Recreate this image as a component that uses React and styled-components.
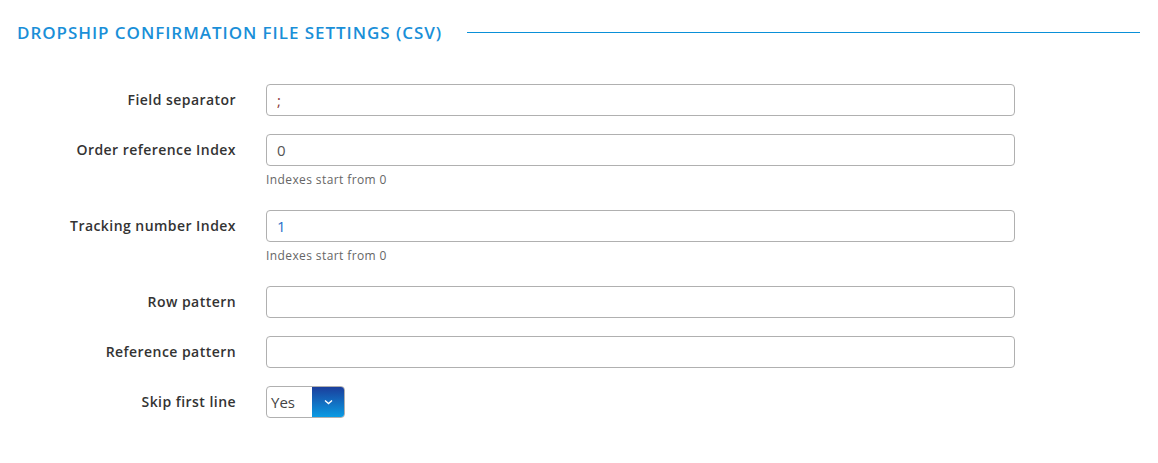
import React from "react";
import styled, { createGlobalStyle } from "styled-components";

const GlobalStyle = createGlobalStyle`
  body {
    margin: 0;
    background: #fff;
    font-family: "Open Sans", "Liberation Sans", sans-serif;
  }
`;

const Page = styled.div`
  padding: 20px 18px 40px 17px;
`;

const Heading = styled.div`
  display: flex;
  align-items: center;
  gap: 25px;
  height: 24px;
  margin-bottom: 40px;
`;

const Title = styled.h2`
  margin: 0;
  font-size: 17px;
  font-weight: 600;
  color: #1a8fd8;
  letter-spacing: 0.95px;
  white-space: nowrap;
`;

const Rule = styled.div`
  flex: 1;
  height: 1px;
  background: #0a90d8;
`;

const Form = styled.div`
  display: flex;
  flex-direction: column;
  gap: 18px;
`;

const Row = styled.div`
  display: grid;
  grid-template-columns: 219px 749px;
  column-gap: 30px;
  align-items: start;
`;

const Label = styled.label`
  text-align: right;
  font-size: 14px;
  font-weight: 600;
  color: #333;
  line-height: 32px;
  letter-spacing: 0.45px;
  white-space: nowrap;
`;

const Field = styled.div`
  display: flex;
  flex-direction: column;
`;

const Input = styled.input`
  box-sizing: border-box;
  width: 100%;
  height: 32px;
  padding: 0 10px;
  border: 1px solid #b0b0b0;
  border-radius: 4px;
  font-family: inherit;
  font-size: 15px;
  color: ${(p) => p.$color || "#555"};
  outline: none;
`;

const Help = styled.div`
  padding: 6px 0 5px;
  font-size: 12px;
  line-height: 15px;
  letter-spacing: 0.4px;
  color: #666;
`;

const Select = styled.div`
  display: flex;
  width: 79px;
  height: 32px;
  box-sizing: border-box;
  border: 1px solid #b0b0b0;
  border-radius: 4px;
  overflow: hidden;
`;

const SelectValue = styled.div`
  flex: 1;
  padding-left: 4px;
  font-size: 15px;
  line-height: 30px;
  color: #444;
`;

const SelectButton = styled.div`
  width: 32px;
  display: flex;
  align-items: center;
  justify-content: center;
  background: linear-gradient(to bottom, #1b3e9c, #0a9be3);
`;

const Chevron = () => (
  <svg width="9" height="6" viewBox="0 0 9 6">
    <path d="M1 1.5l3.5 3 3.5-3" fill="none" stroke="#fff" strokeWidth="1.4" />
  </svg>
);

export default function App() {
  return (
    <>
      <GlobalStyle />
      <Page>
        <Heading>
          <Title>DROPSHIP CONFIRMATION FILE SETTINGS (CSV)</Title>
          <Rule />
        </Heading>
        <Form>
          <Row>
            <Label>Field separator</Label>
            <Field>
              <Input defaultValue=";" $color="#8b3a3a" />
            </Field>
          </Row>
          <Row>
            <Label>Order reference Index</Label>
            <Field>
              <Input defaultValue="0" />
              <Help>Indexes start from 0</Help>
            </Field>
          </Row>
          <Row>
            <Label>Tracking number Index</Label>
            <Field>
              <Input defaultValue="1" $color="#2a6fc9" />
              <Help>Indexes start from 0</Help>
            </Field>
          </Row>
          <Row>
            <Label>Row pattern</Label>
            <Field>
              <Input />
            </Field>
          </Row>
          <Row>
            <Label>Reference pattern</Label>
            <Field>
              <Input />
            </Field>
          </Row>
          <Row>
            <Label>Skip first line</Label>
            <Field>
              <Select>
                <SelectValue>Yes</SelectValue>
                <SelectButton>
                  <Chevron />
                </SelectButton>
              </Select>
            </Field>
          </Row>
        </Form>
      </Page>
    </>
  );
}
